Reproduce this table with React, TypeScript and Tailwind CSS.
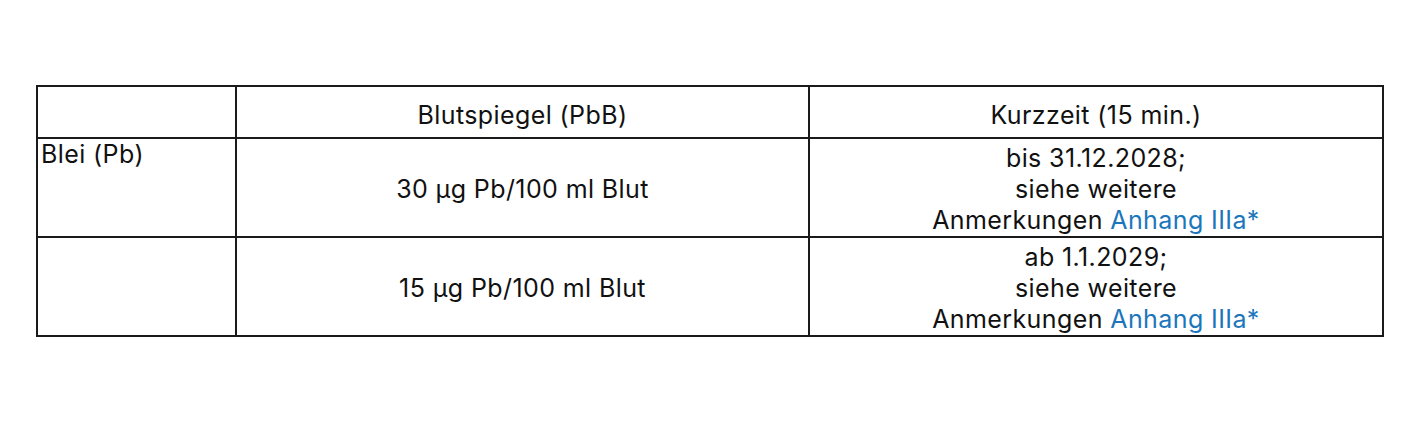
export default function App() {
  const link = "text-[#1b76bb]";
  return (
    <div className="w-[1417px] h-[425px] bg-white pt-[85px] pl-[36px] font-['Inter',sans-serif] text-[25px] leading-[31px] tracking-[0.4px] text-[#111]">
      <table className="border-collapse table-fixed w-[1346px]">
        <colgroup>
          <col className="w-[199px]" />
          <col className="w-[573px]" />
          <col className="w-[574px]" />
        </colgroup>
        <tbody>
          <tr className="h-[52px]">
            <td className="border-2 border-[#1a1a1a]"></td>
            <td className="border-2 border-[#1a1a1a] text-center align-middle pt-[6px]">
              Blutspiegel (PbB)
            </td>
            <td className="border-2 border-[#1a1a1a] text-center align-middle pt-[6px]">
              Kurzzeit (15 min.)
            </td>
          </tr>
          <tr className="h-[99px]">
            <td className="border-2 border-[#1a1a1a] align-top px-[3px] pt-0">Blei (Pb)</td>
            <td className="border-2 border-[#1a1a1a] text-center align-middle pt-[3px]">
              30 µg Pb/100 ml Blut
            </td>
            <td className="border-2 border-[#1a1a1a] text-center align-middle pt-[3px]">
              bis 31.12.2028;
              <br />
              siehe weitere
              <br />
              Anmerkungen <span className={link}>Anhang IIIa*</span>
            </td>
          </tr>
          <tr className="h-[99px]">
            <td className="border-2 border-[#1a1a1a]"></td>
            <td className="border-2 border-[#1a1a1a] text-center align-middle pt-[4px]">
              15 µg Pb/100 ml Blut
            </td>
            <td className="border-2 border-[#1a1a1a] text-center align-middle pt-[4px]">
              ab 1.1.2029;
              <br />
              siehe weitere
              <br />
              Anmerkungen <span className={link}>Anhang IIIa*</span>
            </td>
          </tr>
        </tbody>
      </table>
    </div>
  );
}
